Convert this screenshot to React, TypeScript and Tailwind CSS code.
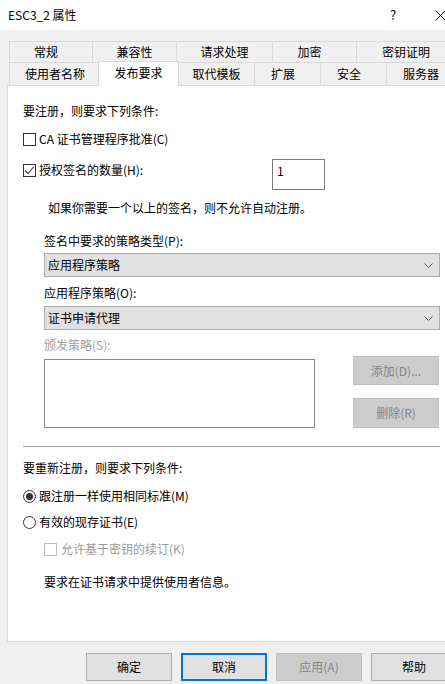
import React from "react";

const row1 = [
  { label: "常规", w: "w-[84px]", pad: "pr-[10px]" },
  { label: "兼容性", w: "w-[84px]", pad: "" },
  { label: "请求处理", w: "w-[96px]", pad: "" },
  { label: "加密", w: "w-[84px]", pad: "pr-[10px]" },
  { label: "密钥证明", w: "w-[99px]", pad: "" },
];

const row2Left = { label: "使用者名称", w: "w-[91px]" };
const row2Right = [
  { label: "取代模板", w: "w-[76px]", pad: "" },
  { label: "扩展", w: "w-[66px]", pad: "pr-[9px]" },
  { label: "安全", w: "w-[66px]", pad: "pr-[9px]" },
  { label: "服务器", w: "w-[69px]", pad: "" },
];

function Check({ checked, disabled }: { checked?: boolean; disabled?: boolean }) {
  return (
    <span
      className={`w-[13px] h-[13px] shrink-0 border bg-white flex items-center justify-center ${
        disabled ? "border-[#bcbcbc]" : "border-[#333333]"
      }`}
    >
      {checked && (
        <svg width="11" height="11" viewBox="0 0 11 11">
          <path d="M1 5.5 L4 8.5 L10 1.5" stroke="#333333" strokeWidth="1.1" fill="none" />
        </svg>
      )}
    </span>
  );
}

function Radio({ checked }: { checked?: boolean }) {
  return (
    <span className="w-[13px] h-[13px] shrink-0 rounded-full border border-[#333333] bg-white flex items-center justify-center">
      {checked && <span className="w-[7px] h-[7px] rounded-full bg-[#333333]" />}
    </span>
  );
}

function Select({ value }: { value: string }) {
  return (
    <div className="h-[24px] w-[396px] bg-[#e1e1e1] border border-[#adadad] flex items-center justify-between pl-[3px] pr-[6px]">
      <span>{value}</span>
      <svg width="9" height="5" viewBox="0 0 9 5">
        <polyline points="0.5,0.5 4.5,4.5 8.5,0.5" stroke="#606060" fill="none" />
      </svg>
    </div>
  );
}

function Button({ label, primary, disabled }: { label: string; primary?: boolean; disabled?: boolean }) {
  return (
    <div
      className={`w-[86px] h-[28px] flex items-center justify-center ${
        disabled
          ? "bg-[#cccccc] border border-[#bfbfbf] text-[#838383]"
          : primary
          ? "bg-[#e1e1e1] border-2 border-[#0078d7] text-black"
          : "bg-[#e1e1e1] border border-[#adadad] text-black"
      }`}
    >
      {label}
    </div>
  );
}

export default function App() {
  return (
    <div className="w-[445px] h-[684px] overflow-hidden bg-[#f0f0f0] text-[12px] leading-[16px] text-black font-['Noto_Sans_CJK_SC',sans-serif]">
      <div className="w-[463px]">
        {/* Title bar */}
        <div className="h-[30px] bg-white flex items-center relative">
          <span className="pl-[8px]">ESC3_2 属性</span>
          <span className="absolute left-[390px] top-[7px] text-[13px]">?</span>
          <svg className="absolute left-[435px] top-[10px]" width="11" height="11" viewBox="0 0 11 11">
            <path d="M0.5 0.5 L10.5 10.5 M10.5 0.5 L0.5 10.5" stroke="#000" strokeWidth="1" />
          </svg>
        </div>

        {/* Tabs */}
        <div className="pt-[11px] pl-[9px]">
          <div className="flex h-[21px]">
            {row1.map((t, i) => (
              <div
                key={t.label}
                className={`${t.w} ${t.pad} h-[21px] border-t border-r border-[#d9d9d9] ${
                  i === 0 ? "border-l" : ""
                } flex items-center justify-center`}
              >
                {t.label}
              </div>
            ))}
          </div>
          <div className="flex h-[23px] relative z-10">
            <div
              className={`${row2Left.w} h-[23px] border-t border-l border-[#d9d9d9] flex items-center justify-center`}
            >
              {row2Left.label}
            </div>
            <div className="w-[81px] -ml-[2px] h-[25px] -mt-[1px] bg-white border-t border-l border-r border-[#d9d9d9] flex items-center justify-center pb-[2px]">
              发布要求
            </div>
            {row2Right.map((t) => (
              <div
                key={t.label}
                className={`${t.w} ${t.pad} h-[23px] border-t border-r border-[#d9d9d9] flex items-center justify-center`}
              >
                {t.label}
              </div>
            ))}
          </div>
        </div>

        {/* Panel */}
        <div className="ml-[7px] w-[449px] h-[557px] bg-white border border-[#d9d9d9] pl-[15px] pt-[17px]">
          <div className="h-[16px] flex items-center">要注册，则要求下列条件:</div>

          <div className="mt-[12px] h-[16px] flex items-center gap-[3px]">
            <Check />
            <span>CA 证书管理程序批准(C)</span>
          </div>

          <div className="mt-[12px] h-[31px] flex items-start">
            <div className="h-[22px] w-[249px] flex items-center gap-[3px]">
              <Check checked />
              <span>授权签名的数量(H):</span>
            </div>
            <div className="w-[53px] h-[31px] border border-[#7a7a7a] bg-white pl-[4px] pt-[3px]">1</div>
          </div>

          <div className="mt-[10px] h-[16px] pl-[25px] flex items-center">
            如果你需要一个以上的签名，则不允许自动注册。
          </div>

          <div className="pl-[21px]">
            <div className="mt-[17px] h-[16px] flex items-center">签名中要求的策略类型(P):</div>
            <div className="mt-[4px]">
              <Select value="应用程序策略" />
            </div>
            <div className="mt-[8px] h-[16px] flex items-center">应用程序策略(O):</div>
            <div className="mt-[5px]">
              <Select value="证书申请代理" />
            </div>
            <div className="mt-[7px] h-[16px] flex items-center text-[#a0a0a0]">颁发策略(S):</div>
            <div className="mt-[3px] flex items-start">
              <div className="mt-[3px] w-[271px] h-[69px] border border-[#828790] bg-white" />
              <div className="ml-[38px] flex flex-col gap-[13px]">
                <div className="w-[86px] h-[29px] bg-[#cccccc] border border-[#bfbfbf] text-[#838383] flex items-center justify-center">
                  添加(D)...
                </div>
                <div className="w-[86px] h-[30px] bg-[#cccccc] border border-[#bfbfbf] text-[#838383] flex items-center justify-center">
                  删除(R)
                </div>
              </div>
            </div>
          </div>

          <div className="mt-[18px] w-[417px] h-px bg-[#a0a0a0]" />

          <div className="mt-[13px] h-[16px] flex items-center">要重新注册，则要求下列条件:</div>

          <div className="mt-[12px] h-[16px] flex items-center gap-[3px]">
            <Radio checked />
            <span>跟注册一样使用相同标准(M)</span>
          </div>

          <div className="mt-[10px] h-[16px] flex items-center gap-[3px]">
            <Radio />
            <span>有效的现存证书(E)</span>
          </div>

          <div className="mt-[11px] h-[16px] pl-[21px] flex items-center gap-[4px] text-[#9a9a9a]">
            <Check disabled />
            <span>允许基于密钥的续订(K)</span>
          </div>

          <div className="mt-[17px] h-[16px] pl-[21px] flex items-center">要求在证书请求中提供使用者信息。</div>
        </div>

        {/* Dialog buttons */}
        <div className="mt-[11px] pl-[86px] flex gap-[9px]">
          <Button label="确定" />
          <Button label="取消" primary />
          <Button label="应用(A)" disabled />
          <Button label="帮助" />
        </div>
      </div>
    </div>
  );
}
